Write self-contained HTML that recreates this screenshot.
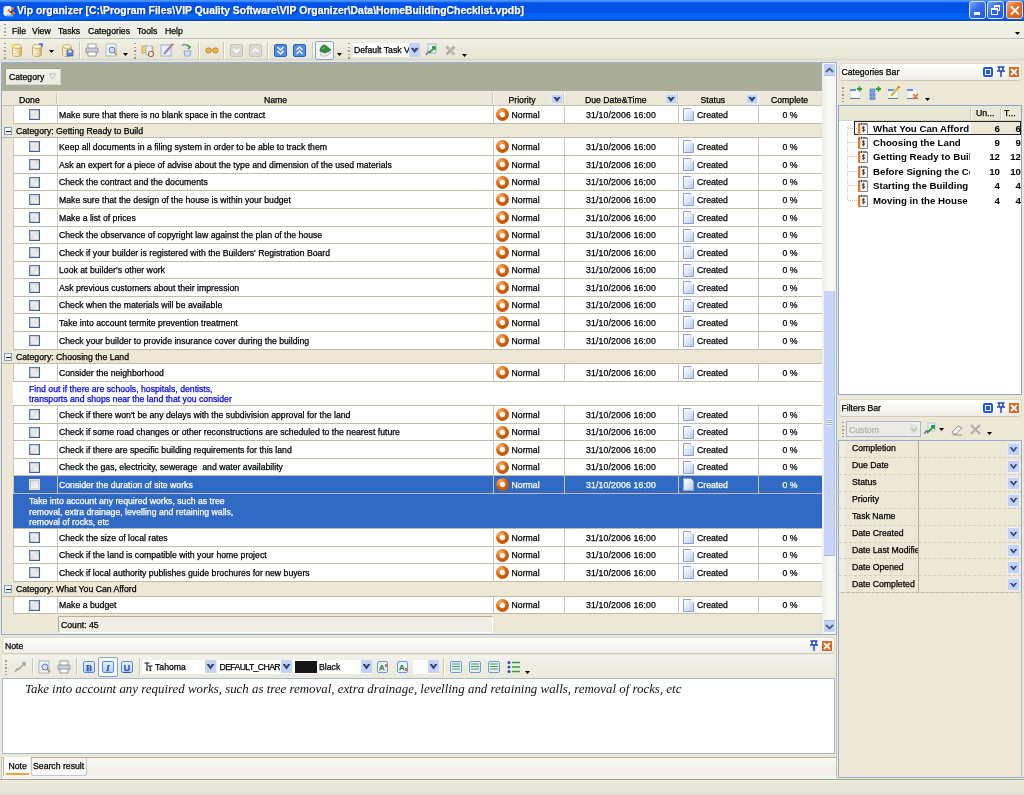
<!DOCTYPE html><html><head><meta charset="utf-8"><style>*{margin:0;padding:0;box-sizing:border-box}
html,body{width:1024px;height:795px;overflow:hidden;background:#ede7d6;font-family:"Liberation Sans",sans-serif;font-size:8.7px;color:#000;position:relative}
.a{position:absolute}
.t{position:absolute;white-space:nowrap;line-height:10px;-webkit-text-stroke:.25px currentColor}
/* title bar */
#title{left:0;top:0;width:1024px;height:21px;background:linear-gradient(#4d94f8 0,#4d94f8 1px,#0a63f0 2.5px,#0053e6 3.5px,#0053e6 12.5px,#0062f6 13.5px,#0062f6 19px,#0448d2 20px,#0448d2 21px)}
#title .tt{left:17px;top:4px;color:#fff;font-weight:bold;font-size:11.2px;text-shadow:1px 1px 0 #0b2d8f;line-height:13px;transform:scaleX(.93);transform-origin:0 0}
.wb{position:absolute;top:1px;width:17px;height:18px;border:1px solid #dde6fb;border-radius:3px;background:linear-gradient(135deg,#7ba5f7,#3a70ec 40%,#1f55e0)}
.wb.x{border-color:#f3d9c4;background:linear-gradient(135deg,#f2a878,#e16c24 45%,#d05a14)}
/* menubar */
#menu{left:0;top:21px;width:1024px;height:18px;background:linear-gradient(#fcfae8 0,#fcfae8 1px,#eeefe4 2.5px,#f0efe6 100%);border-bottom:1px solid #bdbcb3}
#menu .t{top:4.7px;font-size:8.7px}
/* toolbar */
#tool{left:0;top:39px;width:1024px;height:23px;background:linear-gradient(#f1f1e6 0,#edecdd 30%,#ece6da 45%,#eae8d8 60%,#e8e8d6 80%,#d8dccf 88%,#d8dccf 92%,#eee4dc 96%)}
.grip{position:absolute;width:2px;background:repeating-linear-gradient(#9d9b8c 0 1.5px,transparent 1.5px 3.6px)}
.sep{position:absolute;width:2px;background:#cdc9b8;border-right:1px solid #fbfaf5}
/* grid */
#grid{left:1px;top:62px;width:836px;height:573px;border:1px solid #98aed4;background:#ede7d6}
#grpbar{left:2px;top:63px;width:821px;height:28px;background:#abad9b}
#catbtn{left:5px;top:68px;width:56px;height:17px;background:linear-gradient(#f4f3ec,#ecebe2);border:1px solid #a39e8b;border-right-color:#d8d5c6;border-bottom-color:#d8d5c6}
#hdr{left:2px;top:91px;width:820px;height:15px;background:linear-gradient(#f0e9e1 0,#ede8d8 30%,#ebe7d6 100%);border-bottom:1px solid #c4c1ae}
.hs{position:absolute;top:93px;width:2px;height:11px;background:#cbc7b5;border-right:1px solid #f9f8f2}
.dd{position:absolute;width:12px;height:10px;background:#c3d3f6;border:1px solid #e4ecfb;border-radius:1px}
.dd::after{content:"";position:absolute;left:50%;top:50%;width:8px;height:5.5px;margin:-2.5px 0 0 -4px;background:#2c3f6c;clip-path:polygon(0 0,32% 0,50% 42%,68% 0,100% 0,50% 100%)}
.row{position:absolute;left:13px;width:809px;background:#fff;border-bottom:1px solid #bfbcab}
.row.sel{background:#316ac5;color:#fff}
.vl{position:absolute;top:0;bottom:-1px;width:1px;background:#c9c6b6}
.cb{position:absolute;left:16px;width:11px;height:11px;border:1px solid #4262a6;border-top-color:#5d78b0;border-left-color:#5d78b0;box-shadow:inset 0 0 0 .6px rgba(80,105,170,.45);background:linear-gradient(135deg,#f6f6f2,#e4e4de 50%,#fbfbfa)}
.cat{position:absolute;left:2px;width:820px;background:#ede7d6;border-bottom:1px solid #bfbcab}
.exp{position:absolute;left:2px;width:8px;height:8px;border:1px solid #86a0c4;background:linear-gradient(#fff,#eef0f2)}
.exp::after{content:"";position:absolute;left:1px;top:2.5px;width:4.5px;height:1.4px;background:#111}
.pri{position:absolute;left:483px;width:13px;height:13px;border-radius:50%;background:radial-gradient(circle at 50% 50%,#fff 0 2.3px,#f7b070 2.7px,transparent 3.2px),radial-gradient(circle at 35% 30%,#f9b070 0,#ee8a30 3px,#dc6a10 5px,#c95a08 7px)}
.doc{position:absolute;left:670px;width:11px;height:13px;border:1px solid #8aa4d2;background:linear-gradient(135deg,#ffffff,#d9e4f7 60%,#b6c8ea);clip-path:polygon(0 0,70% 0,100% 30%,100% 100%,0 100%)}
.prev{position:absolute;left:13px;width:809px;background:#fff;border-bottom:1px solid #bfbcab;color:#0000ff}
.prev.sel{background:#316ac5;color:#fff}
.ph{position:absolute;height:17px;border:1px solid #dedbcd;border-bottom-color:#cfccbd;border-radius:4px;background:linear-gradient(#fefefd 0,#f8f7f3 45%,#efede6 100%)}
.ibx{position:absolute;width:10px;height:10px;background:#1d5ae0;border-radius:2px}
.ibx::after{content:"";position:absolute;left:2px;top:2px;width:6px;height:6px;box-sizing:border-box;border:1.3px solid #fff;background:#1d5ae0}
.icl{position:absolute;width:10px;height:10px;background:#d9661c}
.tree{position:absolute;background:#fff;border:1px solid #8fa7cf}
.ti{position:absolute;left:34px;font-weight:bold;font-size:9.7px;white-space:nowrap;line-height:11px}
.tn{position:absolute;font-weight:bold;font-size:9.7px;text-align:right;line-height:11px}
.fr{position:absolute;left:1px;width:182px;height:17px;border-bottom:1px dashed #d3cfbf}
.fdd{position:absolute;width:13px;height:13px;background:#c2d3f7;border:1px solid #eaf0fb;border-radius:1px}
.fdd::after{content:"";position:absolute;left:50%;top:50%;width:8px;height:5px;margin:-2px 0 0 -4px;background:#2f4470;clip-path:polygon(0 0,28% 0,50% 50%,72% 0,100% 0,50% 100%)}
</style></head><body><div id="root" style="position:absolute;left:0;top:0;width:1024px;height:795px;overflow:hidden;background:#ede7d6;will-change:transform"><div id="title" class="a">
<svg class="a" style="left:1px;top:2px" width="16" height="16" viewBox="0 0 16 16"><path d="M2.5 6.5c0-1.5 1-2.5 2.5-2.5h4.5l1 2-.5 8H5c-1.5 0-2.5-1-2.5-2z" fill="#f2f0ee"/><path d="M3 7c0-1 .5-2 1.5-2" stroke="#f8c070" stroke-width="1.2" fill="none"/><rect x="5.5" y="12.5" width="6.5" height="2" fill="#9fb0d8"/><path d="M7.5 9.5c0-1.2 1-1.5 1.5-1.5" stroke="#e8720e" stroke-width="2.2" fill="none"/><path d="M8.5 10h3" stroke="#7a1c1c" stroke-width="1.6"/><circle cx="12.5" cy="11" r="1.6" fill="#ea7a14"/><circle cx="11.5" cy="6.5" r="1.4" fill="#f08a24"/></svg>
<div class="t tt">Vip organizer [C:\Program Files\VIP Quality Software\VIP Organizer\Data\HomeBuildingChecklist.vpdb]</div>
<div class="wb" style="left:969px"><div class="a" style="left:4px;top:10px;width:6px;height:3px;background:#fff"></div></div>
<div class="wb" style="left:987px"><div class="a" style="left:6px;top:3px;width:6px;height:6px;border:1px solid #fff;border-top-width:2px"></div><div class="a" style="left:3px;top:6px;width:7px;height:7px;border:1px solid #fff;border-top-width:2px;background:#2d66e8"></div></div>
<div class="wb x" style="left:1006px"><svg class="a" style="left:3px;top:3px" width="10" height="11" viewBox="0 0 10 11"><path d="M1 1.5L9 9.5M9 1.5L1 9.5" stroke="#fff" stroke-width="1.8"/></svg></div>
</div>
<div id="menu" class="a">
<div class="grip" style="left:4px;top:3px;height:12px"></div>
<div class="t" style="left:12px;top:4.7px;">File</div>
<div class="t" style="left:32px;top:4.7px;">View</div>
<div class="t" style="left:58px;top:4.7px;">Tasks</div>
<div class="t" style="left:88px;top:4.7px;">Categories</div>
<div class="t" style="left:137px;top:4.7px;">Tools</div>
<div class="t" style="left:165px;top:4.7px;">Help</div>
<svg class="a" style="left:1015px;top:11px" width="5" height="3" viewBox="0 0 5 3"><path d="M0 0h5L2.5 3z" fill="#000"/></svg>
</div>
<div id="tool" class="a">
<div class="grip" style="left:4px;top:4px;height:16px"></div>
<svg class="a" style="left:10px;top:4px" width="14" height="14" viewBox="0 0 14 14"><defs><linearGradient id="dbg" x1="0" x2="1"><stop offset="0" stop-color="#fffdf4"/><stop offset=".55" stop-color="#f3e3b8"/><stop offset="1" stop-color="#c9a55a"/></linearGradient></defs><path d="M2.5 3.5v8c0 1.1 2 2 4.5 2s4.5-.9 4.5-2v-8" fill="url(#dbg)" stroke="#c19a4e" stroke-width=".8"/><ellipse cx="7" cy="3.5" rx="4.5" ry="2" fill="#fbf3d8" stroke="#c19a4e" stroke-width=".8"/><path d="M2.8 7c1 .9 7.4.9 8.4 0M2.8 10c1 .9 7.4.9 8.4 0" fill="none" stroke="#e0c98e" stroke-width=".7"/><path d="M1 2.5h4M3 .5v4M1.5 1l3 3M4.5 1l-3 3" stroke="#f4e23a" stroke-width="1"/></svg>
<svg class="a" style="left:30px;top:4px" width="14" height="14" viewBox="0 0 14 14"><defs><linearGradient id="dbg" x1="0" x2="1"><stop offset="0" stop-color="#fffdf4"/><stop offset=".55" stop-color="#f3e3b8"/><stop offset="1" stop-color="#c9a55a"/></linearGradient></defs><path d="M2.5 3.5v8c0 1.1 2 2 4.5 2s4.5-.9 4.5-2v-8" fill="url(#dbg)" stroke="#c19a4e" stroke-width=".8"/><ellipse cx="7" cy="3.5" rx="4.5" ry="2" fill="#fbf3d8" stroke="#c19a4e" stroke-width=".8"/><path d="M2.8 7c1 .9 7.4.9 8.4 0M2.8 10c1 .9 7.4.9 8.4 0" fill="none" stroke="#e0c98e" stroke-width=".7"/><path d="M9 1h3v3" fill="none" stroke="#3a6fd8" stroke-width="1.6"/></svg>
<svg class="a" style="left:49px;top:11px" width="5" height="3" viewBox="0 0 5 3"><path d="M0 0h5L2.5 3z" fill="#000"/></svg>
<svg class="a" style="left:60px;top:4px" width="14" height="14" viewBox="0 0 14 14"><defs><linearGradient id="dbg" x1="0" x2="1"><stop offset="0" stop-color="#fffdf4"/><stop offset=".55" stop-color="#f3e3b8"/><stop offset="1" stop-color="#c9a55a"/></linearGradient></defs><path d="M2.5 3.5v8c0 1.1 2 2 4.5 2s4.5-.9 4.5-2v-8" fill="url(#dbg)" stroke="#c19a4e" stroke-width=".8"/><ellipse cx="7" cy="3.5" rx="4.5" ry="2" fill="#fbf3d8" stroke="#c19a4e" stroke-width=".8"/><path d="M2.8 7c1 .9 7.4.9 8.4 0M2.8 10c1 .9 7.4.9 8.4 0" fill="none" stroke="#e0c98e" stroke-width=".7"/><rect x="7" y="7" width="6" height="6" fill="#5f7fc8" stroke="#3b5ba8" stroke-width=".6"/><rect x="8.5" y="7.5" width="3" height="2" fill="#fff"/></svg>
<div class="sep" style="left:79px;top:3px;height:17px"></div>
<svg class="a" style="left:85px;top:4px" width="14" height="14" viewBox="0 0 14 14"><rect x="3" y="1" width="8" height="5" fill="#fff" stroke="#8a8a8a" stroke-width=".8"/><rect x="1" y="5" width="12" height="5" rx="1" fill="#c9cdd4" stroke="#7d8593" stroke-width=".8"/><rect x="3" y="9" width="8" height="4" fill="#fff" stroke="#8a8a8a" stroke-width=".8"/></svg>
<svg class="a" style="left:105px;top:4px" width="14" height="14" viewBox="0 0 14 14"><rect x="1" y="1" width="10" height="12" fill="#f4f7fc" stroke="#9aa7c0" stroke-width=".8"/><circle cx="7" cy="7" r="3" fill="#cfe0f8" stroke="#5b7bb6" stroke-width="1"/><path d="M9 9l3 3" stroke="#c08a3a" stroke-width="1.5"/></svg>
<svg class="a" style="left:123px;top:14px" width="5" height="3" viewBox="0 0 5 3"><path d="M0 0h5L2.5 3z" fill="#000"/></svg>
<div class="grip" style="left:134px;top:4px;height:16px"></div>
<svg class="a" style="left:141px;top:4px" width="14" height="14" viewBox="0 0 14 14"><path d="M1 3h5l1 1h5v6H1z" fill="#f2d36a" stroke="#c09a30" stroke-width=".7"/><rect x="5" y="3" width="6" height="9" fill="#e8effa" stroke="#8ea5cf" stroke-width=".7"/><circle cx="10" cy="11" r="2.5" fill="#fff" stroke="#c0552a" stroke-width="1.2"/></svg>
<svg class="a" style="left:160px;top:4px" width="14" height="14" viewBox="0 0 14 14"><rect x="1" y="2" width="10" height="11" fill="#eef3fb" stroke="#8a9dc4" stroke-width=".8"/><path d="M4 11l7-8" stroke="#9a7ad0" stroke-width="2"/><path d="M11 3l2-2" stroke="#e0702a" stroke-width="2"/></svg>
<svg class="a" style="left:180px;top:4px" width="14" height="14" viewBox="0 0 14 14"><path d="M2 3c1-2 4-2 5 0" fill="none" stroke="#7f93b8" stroke-width="1.5"/><path d="M7 2l3 2-2 2" fill="none" stroke="#39a03a" stroke-width="1.6"/><path d="M4 8h7l-1 5H5z" fill="#cfe0f6" stroke="#7a9ad0" stroke-width=".8"/></svg>
<div class="sep" style="left:198px;top:3px;height:17px"></div>
<svg class="a" style="left:205px;top:4px" width="14" height="14" viewBox="0 0 14 14"><rect x="1" y="5" width="5" height="5" rx="2" fill="#f2b84a" stroke="#b0762a" stroke-width=".8"/><rect x="8" y="5" width="5" height="5" rx="2" fill="#f2b84a" stroke="#b0762a" stroke-width=".8"/><rect x="5" y="6" width="4" height="2" fill="#d9a040"/></svg>
<div class="sep" style="left:223px;top:3px;height:17px"></div>
<svg class="a" style="left:230px;top:5px" width="13" height="13" viewBox="0 0 13 13"><rect x=".5" y=".5" width="12" height="12" rx="1.5" fill="#d9d8d2" stroke="#c4c3bc" stroke-width="1"/><path d="M3.5 5l3 3 3-3" fill="none" stroke="#fff" stroke-width="1.6"/></svg>
<svg class="a" style="left:249px;top:5px" width="13" height="13" viewBox="0 0 13 13"><rect x=".5" y=".5" width="12" height="12" rx="1.5" fill="#d9d8d2" stroke="#c4c3bc" stroke-width="1"/><path d="M3.5 8l3-3 3 3" fill="none" stroke="#fff" stroke-width="1.6"/></svg>
<div class="sep" style="left:267px;top:3px;height:17px"></div>
<svg class="a" style="left:274px;top:5px" width="13" height="13" viewBox="0 0 13 13"><rect x=".5" y=".5" width="12" height="12" rx="1.5" fill="#4f8ce8" stroke="#2d64c4" stroke-width="1"/><path d="M3.5 3l3 3 3-3M3.5 7l3 3 3-3" fill="none" stroke="#fff" stroke-width="1.3"/></svg>
<svg class="a" style="left:293px;top:5px" width="13" height="13" viewBox="0 0 13 13"><rect x=".5" y=".5" width="12" height="12" rx="1.5" fill="#4f8ce8" stroke="#2d64c4" stroke-width="1"/><path d="M3.5 6l3-3 3 3M3.5 10l3-3 3 3" fill="none" stroke="#fff" stroke-width="1.3"/></svg>
<div class="sep" style="left:312px;top:3px;height:17px"></div>
<div class="a" style="left:315px;top:2px;width:19px;height:19px;border:1px solid #8aa2c8;border-radius:2px;background:#f4f4f0"></div>
<svg class="a" style="left:318px;top:4px" width="14" height="14" viewBox="0 0 14 14"><path d="M3 13l-1-5 5-1 6 3-5 3z" fill="#e6ebf0" stroke="#9aa8b8" stroke-width=".6"/><path d="M2 8c0-3 2-6 5-6l6 5-6 3z" fill="#2d8f3c" stroke="#1b5e26" stroke-width=".7"/><path d="M4 6l3-2" stroke="#7fd08a" stroke-width="1"/></svg>
<svg class="a" style="left:337px;top:14px" width="5" height="3" viewBox="0 0 5 3"><path d="M0 0h5L2.5 3z" fill="#000"/></svg>
<div class="grip" style="left:348px;top:4px;height:16px"></div>
<div class="a" style="left:353px;top:4px;width:67px;height:14px;background:#fff"><div class="t" style="left:1px;top:2px">Default Task V</div></div>
<div class="dd" style="left:409px;top:4px;width:11px;height:14px;border:none;background:#c1d2f6"></div>
<svg class="a" style="left:411px;top:8px" width="8" height="6" viewBox="0 0 8 6"><path d="M1 1l3 3 3-3" fill="none" stroke="#3c4f78" stroke-width="1.7"/></svg>
<svg class="a" style="left:424px;top:4px" width="14" height="14" viewBox="0 0 14 14"><rect x="4" y="1" width="8" height="9" fill="#e8eef9" stroke="#8ea5cf" stroke-width=".7"/><path d="M2 12l2-3h3" fill="none" stroke="#7a6ad0" stroke-width="1.4"/><path d="M5 10l5-5M8 4h3v3" fill="none" stroke="#39a03a" stroke-width="1.8"/></svg>
<svg class="a" style="left:444px;top:5px" width="13" height="13" viewBox="0 0 13 13"><path d="M2.5 2.5l8 8M10.5 2.5l-8 8" stroke="#b0afa8" stroke-width="2.8"/><path d="M3 2.5l7.5 7.5" stroke="#d8d7d0" stroke-width=".8"/></svg>
<svg class="a" style="left:462px;top:15px" width="5" height="3" viewBox="0 0 5 3"><path d="M0 0h5L2.5 3z" fill="#000"/></svg>
</div>
<div id="grid" class="a"></div>
<div id="grpbar" class="a"></div>
<div id="catbtn" class="a"><div class="t" style="left:3px;top:3.3px">Category</div><svg class="a" style="left:43px;top:4px" width="7" height="7" viewBox="0 0 7 7"><path d="M.5 .8h6L3.5 6z" fill="none" stroke="#b9b7ab" stroke-width=".9"/></svg></div>
<div id="hdr" class="a"></div>
<div class="hs" style="left:56px"></div>
<div class="hs" style="left:492px"></div>
<div class="hs" style="left:563px"></div>
<div class="hs" style="left:677px"></div>
<div class="hs" style="left:757px"></div>
<div class="t" style="left:19px;top:94.8px;">Done</div>
<div class="t" style="left:264px;top:94.8px;">Name</div>
<div class="t" style="left:508.5px;top:94.8px;">Priority</div>
<div class="t" style="left:585px;top:94.8px;">Due Date&amp;Time</div>
<div class="t" style="left:700.5px;top:94.8px;">Status</div>
<div class="t" style="left:771px;top:94.8px;">Complete</div>
<div class="dd" style="left:551px;top:94px"></div>
<div class="dd" style="left:665px;top:94px"></div>
<div class="dd" style="left:746px;top:94px"></div>
<div class="row" style="top:106px;height:18px"><div class="vl" style="left:0"></div><div class="vl" style="left:44px"></div><div class="vl" style="left:480px"></div><div class="vl" style="left:551px"></div><div class="vl" style="left:665px"></div><div class="vl" style="left:745px"></div><div class="cb" style="top:3px;"></div><div class="t" style="left:46px;top:4.3px">Make sure that there is no blank space in the contract</div><div class="pri" style="top:2px"></div><div class="t" style="left:498.6px;top:4.3px">Normal</div><div class="t" style="left:551px;width:114px;text-align:center;top:4.3px;letter-spacing:.15px">31/10/2006 16:00</div><div class="doc" style="top:2px"></div><div class="t" style="left:684px;top:4.3px">Created</div><div class="t" style="left:745px;width:64px;text-align:center;top:4.3px">0 %</div></div>
<div class="cat" style="top:124px;height:14px"><div class="exp" style="top:3px"></div><div class="t" style="left:14px;top:1.5px">Category: Getting Ready to Build</div></div>
<div class="row" style="top:138px;height:18px"><div class="vl" style="left:0"></div><div class="vl" style="left:44px"></div><div class="vl" style="left:480px"></div><div class="vl" style="left:551px"></div><div class="vl" style="left:665px"></div><div class="vl" style="left:745px"></div><div class="cb" style="top:3px;"></div><div class="t" style="left:46px;top:3.7px">Keep all documents in a filing system in order to be able to track them</div><div class="pri" style="top:2px"></div><div class="t" style="left:498.6px;top:3.7px">Normal</div><div class="t" style="left:551px;width:114px;text-align:center;top:3.7px;letter-spacing:.15px">31/10/2006 16:00</div><div class="doc" style="top:2px"></div><div class="t" style="left:684px;top:3.7px">Created</div><div class="t" style="left:745px;width:64px;text-align:center;top:3.7px">0 %</div></div>
<div class="row" style="top:156px;height:18px"><div class="vl" style="left:0"></div><div class="vl" style="left:44px"></div><div class="vl" style="left:480px"></div><div class="vl" style="left:551px"></div><div class="vl" style="left:665px"></div><div class="vl" style="left:745px"></div><div class="cb" style="top:3px;"></div><div class="t" style="left:46px;top:3.7px">Ask an expert for a piece of advise about the type and dimension of the used materials</div><div class="pri" style="top:2px"></div><div class="t" style="left:498.6px;top:3.7px">Normal</div><div class="t" style="left:551px;width:114px;text-align:center;top:3.7px;letter-spacing:.15px">31/10/2006 16:00</div><div class="doc" style="top:2px"></div><div class="t" style="left:684px;top:3.7px">Created</div><div class="t" style="left:745px;width:64px;text-align:center;top:3.7px">0 %</div></div>
<div class="row" style="top:174px;height:17px"><div class="vl" style="left:0"></div><div class="vl" style="left:44px"></div><div class="vl" style="left:480px"></div><div class="vl" style="left:551px"></div><div class="vl" style="left:665px"></div><div class="vl" style="left:745px"></div><div class="cb" style="top:3px;"></div><div class="t" style="left:46px;top:3.2px">Check the contract and the documents</div><div class="pri" style="top:2px"></div><div class="t" style="left:498.6px;top:3.2px">Normal</div><div class="t" style="left:551px;width:114px;text-align:center;top:3.2px;letter-spacing:.15px">31/10/2006 16:00</div><div class="doc" style="top:2px"></div><div class="t" style="left:684px;top:3.2px">Created</div><div class="t" style="left:745px;width:64px;text-align:center;top:3.2px">0 %</div></div>
<div class="row" style="top:191px;height:18px"><div class="vl" style="left:0"></div><div class="vl" style="left:44px"></div><div class="vl" style="left:480px"></div><div class="vl" style="left:551px"></div><div class="vl" style="left:665px"></div><div class="vl" style="left:745px"></div><div class="cb" style="top:3px;"></div><div class="t" style="left:46px;top:3.7px">Make sure that the design of the house is within your budget</div><div class="pri" style="top:2px"></div><div class="t" style="left:498.6px;top:3.7px">Normal</div><div class="t" style="left:551px;width:114px;text-align:center;top:3.7px;letter-spacing:.15px">31/10/2006 16:00</div><div class="doc" style="top:2px"></div><div class="t" style="left:684px;top:3.7px">Created</div><div class="t" style="left:745px;width:64px;text-align:center;top:3.7px">0 %</div></div>
<div class="row" style="top:209px;height:18px"><div class="vl" style="left:0"></div><div class="vl" style="left:44px"></div><div class="vl" style="left:480px"></div><div class="vl" style="left:551px"></div><div class="vl" style="left:665px"></div><div class="vl" style="left:745px"></div><div class="cb" style="top:3px;"></div><div class="t" style="left:46px;top:3.7px">Make a list of prices</div><div class="pri" style="top:2px"></div><div class="t" style="left:498.6px;top:3.7px">Normal</div><div class="t" style="left:551px;width:114px;text-align:center;top:3.7px;letter-spacing:.15px">31/10/2006 16:00</div><div class="doc" style="top:2px"></div><div class="t" style="left:684px;top:3.7px">Created</div><div class="t" style="left:745px;width:64px;text-align:center;top:3.7px">0 %</div></div>
<div class="row" style="top:227px;height:17px"><div class="vl" style="left:0"></div><div class="vl" style="left:44px"></div><div class="vl" style="left:480px"></div><div class="vl" style="left:551px"></div><div class="vl" style="left:665px"></div><div class="vl" style="left:745px"></div><div class="cb" style="top:3px;"></div><div class="t" style="left:46px;top:3.2px">Check the observance of copyright law against the plan of the house</div><div class="pri" style="top:2px"></div><div class="t" style="left:498.6px;top:3.2px">Normal</div><div class="t" style="left:551px;width:114px;text-align:center;top:3.2px;letter-spacing:.15px">31/10/2006 16:00</div><div class="doc" style="top:2px"></div><div class="t" style="left:684px;top:3.2px">Created</div><div class="t" style="left:745px;width:64px;text-align:center;top:3.2px">0 %</div></div>
<div class="row" style="top:244px;height:18px"><div class="vl" style="left:0"></div><div class="vl" style="left:44px"></div><div class="vl" style="left:480px"></div><div class="vl" style="left:551px"></div><div class="vl" style="left:665px"></div><div class="vl" style="left:745px"></div><div class="cb" style="top:3px;"></div><div class="t" style="left:46px;top:3.7px">Check if your builder is registered with the Builders&#x27; Registration Board</div><div class="pri" style="top:2px"></div><div class="t" style="left:498.6px;top:3.7px">Normal</div><div class="t" style="left:551px;width:114px;text-align:center;top:3.7px;letter-spacing:.15px">31/10/2006 16:00</div><div class="doc" style="top:2px"></div><div class="t" style="left:684px;top:3.7px">Created</div><div class="t" style="left:745px;width:64px;text-align:center;top:3.7px">0 %</div></div>
<div class="row" style="top:262px;height:17px"><div class="vl" style="left:0"></div><div class="vl" style="left:44px"></div><div class="vl" style="left:480px"></div><div class="vl" style="left:551px"></div><div class="vl" style="left:665px"></div><div class="vl" style="left:745px"></div><div class="cb" style="top:3px;"></div><div class="t" style="left:46px;top:3.2px">Look at builder&#x27;s other work</div><div class="pri" style="top:2px"></div><div class="t" style="left:498.6px;top:3.2px">Normal</div><div class="t" style="left:551px;width:114px;text-align:center;top:3.2px;letter-spacing:.15px">31/10/2006 16:00</div><div class="doc" style="top:2px"></div><div class="t" style="left:684px;top:3.2px">Created</div><div class="t" style="left:745px;width:64px;text-align:center;top:3.2px">0 %</div></div>
<div class="row" style="top:279px;height:18px"><div class="vl" style="left:0"></div><div class="vl" style="left:44px"></div><div class="vl" style="left:480px"></div><div class="vl" style="left:551px"></div><div class="vl" style="left:665px"></div><div class="vl" style="left:745px"></div><div class="cb" style="top:3px;"></div><div class="t" style="left:46px;top:3.7px">Ask previous customers about their impression</div><div class="pri" style="top:2px"></div><div class="t" style="left:498.6px;top:3.7px">Normal</div><div class="t" style="left:551px;width:114px;text-align:center;top:3.7px;letter-spacing:.15px">31/10/2006 16:00</div><div class="doc" style="top:2px"></div><div class="t" style="left:684px;top:3.7px">Created</div><div class="t" style="left:745px;width:64px;text-align:center;top:3.7px">0 %</div></div>
<div class="row" style="top:297px;height:17px"><div class="vl" style="left:0"></div><div class="vl" style="left:44px"></div><div class="vl" style="left:480px"></div><div class="vl" style="left:551px"></div><div class="vl" style="left:665px"></div><div class="vl" style="left:745px"></div><div class="cb" style="top:3px;"></div><div class="t" style="left:46px;top:3.2px">Check when the materials will be available</div><div class="pri" style="top:2px"></div><div class="t" style="left:498.6px;top:3.2px">Normal</div><div class="t" style="left:551px;width:114px;text-align:center;top:3.2px;letter-spacing:.15px">31/10/2006 16:00</div><div class="doc" style="top:2px"></div><div class="t" style="left:684px;top:3.2px">Created</div><div class="t" style="left:745px;width:64px;text-align:center;top:3.2px">0 %</div></div>
<div class="row" style="top:314px;height:18px"><div class="vl" style="left:0"></div><div class="vl" style="left:44px"></div><div class="vl" style="left:480px"></div><div class="vl" style="left:551px"></div><div class="vl" style="left:665px"></div><div class="vl" style="left:745px"></div><div class="cb" style="top:3px;"></div><div class="t" style="left:46px;top:3.7px">Take into account termite prevention treatment</div><div class="pri" style="top:2px"></div><div class="t" style="left:498.6px;top:3.7px">Normal</div><div class="t" style="left:551px;width:114px;text-align:center;top:3.7px;letter-spacing:.15px">31/10/2006 16:00</div><div class="doc" style="top:2px"></div><div class="t" style="left:684px;top:3.7px">Created</div><div class="t" style="left:745px;width:64px;text-align:center;top:3.7px">0 %</div></div>
<div class="row" style="top:332px;height:18px"><div class="vl" style="left:0"></div><div class="vl" style="left:44px"></div><div class="vl" style="left:480px"></div><div class="vl" style="left:551px"></div><div class="vl" style="left:665px"></div><div class="vl" style="left:745px"></div><div class="cb" style="top:3px;"></div><div class="t" style="left:46px;top:3.7px">Check your builder to provide insurance cover during the building</div><div class="pri" style="top:2px"></div><div class="t" style="left:498.6px;top:3.7px">Normal</div><div class="t" style="left:551px;width:114px;text-align:center;top:3.7px;letter-spacing:.15px">31/10/2006 16:00</div><div class="doc" style="top:2px"></div><div class="t" style="left:684px;top:3.7px">Created</div><div class="t" style="left:745px;width:64px;text-align:center;top:3.7px">0 %</div></div>
<div class="cat" style="top:350px;height:14px"><div class="exp" style="top:3px"></div><div class="t" style="left:14px;top:1.5px">Category: Choosing the Land</div></div>
<div class="row" style="top:364px;height:18px"><div class="vl" style="left:0"></div><div class="vl" style="left:44px"></div><div class="vl" style="left:480px"></div><div class="vl" style="left:551px"></div><div class="vl" style="left:665px"></div><div class="vl" style="left:745px"></div><div class="cb" style="top:3px;"></div><div class="t" style="left:46px;top:3.7px">Consider the neighborhood</div><div class="pri" style="top:2px"></div><div class="t" style="left:498.6px;top:3.7px">Normal</div><div class="t" style="left:551px;width:114px;text-align:center;top:3.7px;letter-spacing:.15px">31/10/2006 16:00</div><div class="doc" style="top:2px"></div><div class="t" style="left:684px;top:3.7px">Created</div><div class="t" style="left:745px;width:64px;text-align:center;top:3.7px">0 %</div></div>
<div class="prev" style="top:382px;height:24px"><div class="t" style="left:16px;top:1.5px;line-height:10.4px">Find out if there are schools, hospitals, dentists,<br>transports and shops near the land that you consider</div></div>
<div class="row" style="top:406px;height:18px"><div class="vl" style="left:0"></div><div class="vl" style="left:44px"></div><div class="vl" style="left:480px"></div><div class="vl" style="left:551px"></div><div class="vl" style="left:665px"></div><div class="vl" style="left:745px"></div><div class="cb" style="top:3px;"></div><div class="t" style="left:46px;top:3.7px">Check if there won&#x27;t be any delays with the subdivision approval for the land</div><div class="pri" style="top:2px"></div><div class="t" style="left:498.6px;top:3.7px">Normal</div><div class="t" style="left:551px;width:114px;text-align:center;top:3.7px;letter-spacing:.15px">31/10/2006 16:00</div><div class="doc" style="top:2px"></div><div class="t" style="left:684px;top:3.7px">Created</div><div class="t" style="left:745px;width:64px;text-align:center;top:3.7px">0 %</div></div>
<div class="row" style="top:424px;height:17px"><div class="vl" style="left:0"></div><div class="vl" style="left:44px"></div><div class="vl" style="left:480px"></div><div class="vl" style="left:551px"></div><div class="vl" style="left:665px"></div><div class="vl" style="left:745px"></div><div class="cb" style="top:3px;"></div><div class="t" style="left:46px;top:3.2px">Check if some road changes or other reconstructions are scheduled to the nearest future</div><div class="pri" style="top:2px"></div><div class="t" style="left:498.6px;top:3.2px">Normal</div><div class="t" style="left:551px;width:114px;text-align:center;top:3.2px;letter-spacing:.15px">31/10/2006 16:00</div><div class="doc" style="top:2px"></div><div class="t" style="left:684px;top:3.2px">Created</div><div class="t" style="left:745px;width:64px;text-align:center;top:3.2px">0 %</div></div>
<div class="row" style="top:441px;height:18px"><div class="vl" style="left:0"></div><div class="vl" style="left:44px"></div><div class="vl" style="left:480px"></div><div class="vl" style="left:551px"></div><div class="vl" style="left:665px"></div><div class="vl" style="left:745px"></div><div class="cb" style="top:3px;"></div><div class="t" style="left:46px;top:3.7px">Check if there are specific building requirements for this land</div><div class="pri" style="top:2px"></div><div class="t" style="left:498.6px;top:3.7px">Normal</div><div class="t" style="left:551px;width:114px;text-align:center;top:3.7px;letter-spacing:.15px">31/10/2006 16:00</div><div class="doc" style="top:2px"></div><div class="t" style="left:684px;top:3.7px">Created</div><div class="t" style="left:745px;width:64px;text-align:center;top:3.7px">0 %</div></div>
<div class="row" style="top:459px;height:17px"><div class="vl" style="left:0"></div><div class="vl" style="left:44px"></div><div class="vl" style="left:480px"></div><div class="vl" style="left:551px"></div><div class="vl" style="left:665px"></div><div class="vl" style="left:745px"></div><div class="cb" style="top:3px;"></div><div class="t" style="left:46px;top:3.2px">Check the gas, electricity, sewerage&nbsp; and water availability</div><div class="pri" style="top:2px"></div><div class="t" style="left:498.6px;top:3.2px">Normal</div><div class="t" style="left:551px;width:114px;text-align:center;top:3.2px;letter-spacing:.15px">31/10/2006 16:00</div><div class="doc" style="top:2px"></div><div class="t" style="left:684px;top:3.2px">Created</div><div class="t" style="left:745px;width:64px;text-align:center;top:3.2px">0 %</div></div>
<div class="row sel" style="top:476px;height:18px"><div class="vl" style="left:0"></div><div class="vl" style="left:44px"></div><div class="vl" style="left:480px"></div><div class="vl" style="left:551px"></div><div class="vl" style="left:665px"></div><div class="vl" style="left:745px"></div><div class="cb" style="top:3px;border-color:#e8e8e4;background:linear-gradient(135deg,#d8d8d2,#fcfcfb);"></div><div class="t" style="left:46px;top:3.7px">Consider the duration of site works</div><div class="pri" style="top:2px"></div><div class="t" style="left:498.6px;top:3.7px">Normal</div><div class="t" style="left:551px;width:114px;text-align:center;top:3.7px;letter-spacing:.15px">31/10/2006 16:00</div><div class="doc" style="top:2px"></div><div class="t" style="left:684px;top:3.7px">Created</div><div class="t" style="left:745px;width:64px;text-align:center;top:3.7px">0 %</div></div>
<div class="prev sel" style="top:494px;height:35px"><div class="t" style="left:16px;top:2.3px;line-height:10.4px">Take into account any required works, such as tree<br>removal, extra drainage, levelling and retaining walls,<br>removal of rocks, etc</div></div>
<div class="row" style="top:529px;height:18px"><div class="vl" style="left:0"></div><div class="vl" style="left:44px"></div><div class="vl" style="left:480px"></div><div class="vl" style="left:551px"></div><div class="vl" style="left:665px"></div><div class="vl" style="left:745px"></div><div class="cb" style="top:3px;"></div><div class="t" style="left:46px;top:3.7px">Check the size of local rates</div><div class="pri" style="top:2px"></div><div class="t" style="left:498.6px;top:3.7px">Normal</div><div class="t" style="left:551px;width:114px;text-align:center;top:3.7px;letter-spacing:.15px">31/10/2006 16:00</div><div class="doc" style="top:2px"></div><div class="t" style="left:684px;top:3.7px">Created</div><div class="t" style="left:745px;width:64px;text-align:center;top:3.7px">0 %</div></div>
<div class="row" style="top:547px;height:17px"><div class="vl" style="left:0"></div><div class="vl" style="left:44px"></div><div class="vl" style="left:480px"></div><div class="vl" style="left:551px"></div><div class="vl" style="left:665px"></div><div class="vl" style="left:745px"></div><div class="cb" style="top:3px;"></div><div class="t" style="left:46px;top:3.2px">Check if the land is compatible with your home project</div><div class="pri" style="top:2px"></div><div class="t" style="left:498.6px;top:3.2px">Normal</div><div class="t" style="left:551px;width:114px;text-align:center;top:3.2px;letter-spacing:.15px">31/10/2006 16:00</div><div class="doc" style="top:2px"></div><div class="t" style="left:684px;top:3.2px">Created</div><div class="t" style="left:745px;width:64px;text-align:center;top:3.2px">0 %</div></div>
<div class="row" style="top:564px;height:18px"><div class="vl" style="left:0"></div><div class="vl" style="left:44px"></div><div class="vl" style="left:480px"></div><div class="vl" style="left:551px"></div><div class="vl" style="left:665px"></div><div class="vl" style="left:745px"></div><div class="cb" style="top:3px;"></div><div class="t" style="left:46px;top:3.7px">Check if local authority publishes guide brochures for new buyers</div><div class="pri" style="top:2px"></div><div class="t" style="left:498.6px;top:3.7px">Normal</div><div class="t" style="left:551px;width:114px;text-align:center;top:3.7px;letter-spacing:.15px">31/10/2006 16:00</div><div class="doc" style="top:2px"></div><div class="t" style="left:684px;top:3.7px">Created</div><div class="t" style="left:745px;width:64px;text-align:center;top:3.7px">0 %</div></div>
<div class="cat" style="top:582px;height:15px"><div class="exp" style="top:3px"></div><div class="t" style="left:14px;top:2.0px">Category: What You Can Afford</div></div>
<div class="row" style="top:597px;height:17px"><div class="vl" style="left:0"></div><div class="vl" style="left:44px"></div><div class="vl" style="left:480px"></div><div class="vl" style="left:551px"></div><div class="vl" style="left:665px"></div><div class="vl" style="left:745px"></div><div class="cb" style="top:3px;"></div><div class="t" style="left:46px;top:3.2px">Make a budget</div><div class="pri" style="top:2px"></div><div class="t" style="left:498.6px;top:3.2px">Normal</div><div class="t" style="left:551px;width:114px;text-align:center;top:3.2px;letter-spacing:.15px">31/10/2006 16:00</div><div class="doc" style="top:2px"></div><div class="t" style="left:684px;top:3.2px">Created</div><div class="t" style="left:745px;width:64px;text-align:center;top:3.2px">0 %</div></div>
<div class="a" style="left:2px;top:614px;width:820px;height:20px;background:#ede7d6"></div>
<div class="a" style="left:58px;top:616px;width:435px;height:17px;border:1px solid #b3b09d;border-right-color:#fff;border-bottom-color:#fff;background:#efeee6"><div class="t" style="left:2px;top:3px">Count: 45</div></div>
<div class="a" style="left:822px;top:63px;width:14px;height:571px;background:linear-gradient(90deg,#f0f0ea,#fafaf7 60%,#f3f3ee)"></div>
<div class="a" style="left:824px;top:64px;width:11px;height:12px;background:#c3d4fb;border-bottom:1px solid #a8bcee"><svg class="a" style="left:1px;top:3px" width="9" height="6" viewBox="0 0 9 6"><path d="M1 5L4.5 1.5L8 5" fill="none" stroke="#4d6185" stroke-width="1.8"/></svg></div>
<div class="a" style="left:824px;top:291px;width:11px;height:265px;background:#c6d5f8;border-bottom:1px solid #a6baf0;border-right:1px solid #afc3f2"></div>
<div class="a" style="left:826px;top:419px;width:6px;height:7px;background:repeating-linear-gradient(#eef3fe 0 1px,#9fb2e0 1px 2px)"></div>
<div class="a" style="left:824px;top:620px;width:11px;height:12px;background:#c3d4fb;border-top:1px solid #a8bcee"><svg class="a" style="left:1px;top:3px" width="9" height="6" viewBox="0 0 9 6"><path d="M1 1L4.5 4.5L8 1" fill="none" stroke="#4d6185" stroke-width="1.8"/></svg></div>
<div class="a" style="left:838px;top:62px;width:186px;height:717px;background:#ede7d6"></div>
<div class="a" style="left:838px;top:440px;width:1px;height:338px;background:#98b0dc"></div>
<div class="a" style="left:838px;top:777px;width:186px;height:1px;background:#98b0dc"></div>
<div class="a" style="left:1021px;top:440px;width:1px;height:338px;background:#a9bbd9"></div>
<div class="ph" style="left:839px;top:63px;width:183px;height:18px"></div>
<div class="t" style="left:841.4px;top:67.3px;">Categories Bar</div>
<div class="ibx" style="left:983px;top:67px"></div>
<svg class="a" style="left:996px;top:66px" width="10" height="11" viewBox="0 0 10 11"><path d="M1.5 1h7M3 1v4M7 1v4M1 5h8M5 5v6" stroke="#1d49c0" stroke-width="1.5" fill="none"/></svg>
<div class="icl" style="left:1009px;top:67px"><svg class="a" style="left:1px;top:1px" width="8" height="8" viewBox="0 0 8 8"><path d="M1 1l6 6M7 1L1 7" stroke="#fff" stroke-width="1.8"/></svg></div>
<div class="grip" style="left:842px;top:87px;height:15px"></div>
<svg class="a" style="left:849px;top:86px" width="14" height="14" viewBox="0 0 14 14"><path d="M1 4h3l1-1h6v9H1z" fill="#f6f8fc" stroke="#c9d3e4" stroke-width=".6"/><path d="M1 4h6" stroke="#3a7fe0" stroke-width="1.6"/><path d="M1 12.5h10" stroke="#6c7a8e" stroke-width="1"/><path d="M8 3h5M10.5 .5v5" stroke="#2fa02f" stroke-width="1.8"/></svg>
<svg class="a" style="left:868px;top:86px" width="14" height="14" viewBox="0 0 14 14"><rect x="2" y="3" width="5" height="3" fill="#7aa3e8" stroke="#3f6fc8" stroke-width=".6"/><rect x="2" y="7" width="5" height="3" fill="#7aa3e8" stroke="#3f6fc8" stroke-width=".6"/><rect x="2" y="11" width="5" height="2.5" fill="#7aa3e8" stroke="#3f6fc8" stroke-width=".6"/><path d="M8 3h5M10.5 .5v5" stroke="#2fa02f" stroke-width="1.8"/></svg>
<svg class="a" style="left:887px;top:86px" width="14" height="14" viewBox="0 0 14 14"><path d="M1 4h3l1-1h6v9H1z" fill="#f6f8fc" stroke="#c9d3e4" stroke-width=".6"/><path d="M1 4h6" stroke="#3a7fe0" stroke-width="1.6"/><path d="M1 12.5h10" stroke="#6c7a8e" stroke-width="1"/><path d="M4 10l7-8" stroke="#e7b030" stroke-width="2"/><path d="M11 2l1.5-1.5" stroke="#e06a20" stroke-width="2"/></svg>
<svg class="a" style="left:906px;top:86px" width="14" height="14" viewBox="0 0 14 14"><path d="M1 4h3l1-1h6v9H1z" fill="#f6f8fc" stroke="#c9d3e4" stroke-width=".6"/><path d="M1 4h6" stroke="#3a7fe0" stroke-width="1.6"/><path d="M1 12.5h10" stroke="#6c7a8e" stroke-width="1"/><path d="M7 8l5 5M12 8l-5 5" stroke="#e0702a" stroke-width="1.5"/></svg>
<svg class="a" style="left:925px;top:98px" width="5" height="3" viewBox="0 0 5 3"><path d="M0 0h5L2.5 3z" fill="#000"/></svg>
<div class="tree" style="left:838px;top:105px;width:184px;height:290px"></div>
<div class="a" style="left:839px;top:106px;width:182px;height:15px;background:linear-gradient(#ebe8d8,#e9e6d5);border-bottom:1px solid #d6d2bf"></div>
<div class="hs" style="left:970px;top:108px;height:11px"></div><div class="hs" style="left:1000px;top:108px;height:11px"></div>
<div class="t" style="left:976px;top:108px;">Un...</div>
<div class="t" style="left:1004px;top:108px;">T...</div>
<div class="a" style="left:847px;top:127px;width:1px;height:73px;background:repeating-linear-gradient(#c4c4c4 0 1px,transparent 1px 2px)"></div>
<div class="a" style="left:848px;top:127.5px;width:9px;height:1px;background:repeating-linear-gradient(90deg,#c4c4c4 0 1px,transparent 1px 2px)"></div>
<div class="a" style="left:971px;top:121.0px;width:50px;height:14px;background:#ede7d6"></div>
<div class="a" style="left:854px;top:121.0px;width:167px;height:14px;border:1px solid #222"></div>
<svg class="a" style="left:857px;top:122px" width="12" height="13" viewBox="0 0 12 13"><rect x="1.5" y="2" width="9" height="10.5" fill="#f6f6f8" stroke="#6a6a6a" stroke-width=".8"/><rect x="1" y="2" width="2.2" height="10.8" fill="#e8781e"/><path d="M1.5 2h1.5M8 2h2" stroke="#8a2a3a" stroke-width="1.2"/><path d="M4.5 .8v2M7 .8v2" stroke="#333" stroke-width="1"/><path d="M7.8 5.5c-.5-.8-2.6-.8-2.6.4s2.6.7 2.6 2-2.2 1.2-2.8.3M6.4 4.2v6" fill="none" stroke="#333" stroke-width=".9"/></svg>
<div class="a" style="left:873px;top:122.5px;width:97px;height:12px;overflow:hidden"><div class="ti" style="left:0;top:0">What You Can Afford</div></div>
<div class="tn" style="left:972px;top:122.5px;width:28px">6</div>
<div class="tn" style="left:1001px;top:122.5px;width:20px">6</div>
<div class="a" style="left:848px;top:141.9px;width:9px;height:1px;background:repeating-linear-gradient(90deg,#c4c4c4 0 1px,transparent 1px 2px)"></div>
<svg class="a" style="left:857px;top:136px" width="12" height="13" viewBox="0 0 12 13"><rect x="1.5" y="2" width="9" height="10.5" fill="#f6f6f8" stroke="#6a6a6a" stroke-width=".8"/><rect x="1" y="2" width="2.2" height="10.8" fill="#e8781e"/><path d="M1.5 2h1.5M8 2h2" stroke="#8a2a3a" stroke-width="1.2"/><path d="M4.5 .8v2M7 .8v2" stroke="#333" stroke-width="1"/><path d="M7.8 5.5c-.5-.8-2.6-.8-2.6.4s2.6.7 2.6 2-2.2 1.2-2.8.3M6.4 4.2v6" fill="none" stroke="#333" stroke-width=".9"/></svg>
<div class="a" style="left:873px;top:136.9px;width:97px;height:12px;overflow:hidden"><div class="ti" style="left:0;top:0">Choosing the Land</div></div>
<div class="tn" style="left:972px;top:136.9px;width:28px">9</div>
<div class="tn" style="left:1001px;top:136.9px;width:20px">9</div>
<div class="a" style="left:848px;top:156.3px;width:9px;height:1px;background:repeating-linear-gradient(90deg,#c4c4c4 0 1px,transparent 1px 2px)"></div>
<svg class="a" style="left:857px;top:150px" width="12" height="13" viewBox="0 0 12 13"><rect x="1.5" y="2" width="9" height="10.5" fill="#f6f6f8" stroke="#6a6a6a" stroke-width=".8"/><rect x="1" y="2" width="2.2" height="10.8" fill="#e8781e"/><path d="M1.5 2h1.5M8 2h2" stroke="#8a2a3a" stroke-width="1.2"/><path d="M4.5 .8v2M7 .8v2" stroke="#333" stroke-width="1"/><path d="M7.8 5.5c-.5-.8-2.6-.8-2.6.4s2.6.7 2.6 2-2.2 1.2-2.8.3M6.4 4.2v6" fill="none" stroke="#333" stroke-width=".9"/></svg>
<div class="a" style="left:873px;top:151.3px;width:97px;height:12px;overflow:hidden"><div class="ti" style="left:0;top:0">Getting Ready to Buil</div></div>
<div class="tn" style="left:972px;top:151.3px;width:28px">12</div>
<div class="tn" style="left:1001px;top:151.3px;width:20px">12</div>
<div class="a" style="left:848px;top:170.7px;width:9px;height:1px;background:repeating-linear-gradient(90deg,#c4c4c4 0 1px,transparent 1px 2px)"></div>
<svg class="a" style="left:857px;top:165px" width="12" height="13" viewBox="0 0 12 13"><rect x="1.5" y="2" width="9" height="10.5" fill="#f6f6f8" stroke="#6a6a6a" stroke-width=".8"/><rect x="1" y="2" width="2.2" height="10.8" fill="#e8781e"/><path d="M1.5 2h1.5M8 2h2" stroke="#8a2a3a" stroke-width="1.2"/><path d="M4.5 .8v2M7 .8v2" stroke="#333" stroke-width="1"/><path d="M7.8 5.5c-.5-.8-2.6-.8-2.6.4s2.6.7 2.6 2-2.2 1.2-2.8.3M6.4 4.2v6" fill="none" stroke="#333" stroke-width=".9"/></svg>
<div class="a" style="left:873px;top:165.7px;width:97px;height:12px;overflow:hidden"><div class="ti" style="left:0;top:0">Before Signing the Co</div></div>
<div class="tn" style="left:972px;top:165.7px;width:28px">10</div>
<div class="tn" style="left:1001px;top:165.7px;width:20px">10</div>
<div class="a" style="left:848px;top:185.1px;width:9px;height:1px;background:repeating-linear-gradient(90deg,#c4c4c4 0 1px,transparent 1px 2px)"></div>
<svg class="a" style="left:857px;top:179px" width="12" height="13" viewBox="0 0 12 13"><rect x="1.5" y="2" width="9" height="10.5" fill="#f6f6f8" stroke="#6a6a6a" stroke-width=".8"/><rect x="1" y="2" width="2.2" height="10.8" fill="#e8781e"/><path d="M1.5 2h1.5M8 2h2" stroke="#8a2a3a" stroke-width="1.2"/><path d="M4.5 .8v2M7 .8v2" stroke="#333" stroke-width="1"/><path d="M7.8 5.5c-.5-.8-2.6-.8-2.6.4s2.6.7 2.6 2-2.2 1.2-2.8.3M6.4 4.2v6" fill="none" stroke="#333" stroke-width=".9"/></svg>
<div class="a" style="left:873px;top:180.1px;width:97px;height:12px;overflow:hidden"><div class="ti" style="left:0;top:0">Starting the Building</div></div>
<div class="tn" style="left:972px;top:180.1px;width:28px">4</div>
<div class="tn" style="left:1001px;top:180.1px;width:20px">4</div>
<div class="a" style="left:848px;top:199.5px;width:9px;height:1px;background:repeating-linear-gradient(90deg,#c4c4c4 0 1px,transparent 1px 2px)"></div>
<svg class="a" style="left:857px;top:194px" width="12" height="13" viewBox="0 0 12 13"><rect x="1.5" y="2" width="9" height="10.5" fill="#f6f6f8" stroke="#6a6a6a" stroke-width=".8"/><rect x="1" y="2" width="2.2" height="10.8" fill="#e8781e"/><path d="M1.5 2h1.5M8 2h2" stroke="#8a2a3a" stroke-width="1.2"/><path d="M4.5 .8v2M7 .8v2" stroke="#333" stroke-width="1"/><path d="M7.8 5.5c-.5-.8-2.6-.8-2.6.4s2.6.7 2.6 2-2.2 1.2-2.8.3M6.4 4.2v6" fill="none" stroke="#333" stroke-width=".9"/></svg>
<div class="a" style="left:873px;top:194.5px;width:97px;height:12px;overflow:hidden"><div class="ti" style="left:0;top:0">Moving in the House</div></div>
<div class="tn" style="left:972px;top:194.5px;width:28px">4</div>
<div class="tn" style="left:1001px;top:194.5px;width:20px">4</div>
<div class="ph" style="left:839px;top:399px;width:183px;height:18px"></div>
<div class="t" style="left:841.4px;top:403.3px;">Filters Bar</div>
<div class="ibx" style="left:983px;top:403px"></div>
<svg class="a" style="left:996px;top:402px" width="10" height="11" viewBox="0 0 10 11"><path d="M1.5 1h7M3 1v4M7 1v4M1 5h8M5 5v6" stroke="#1d49c0" stroke-width="1.5" fill="none"/></svg>
<div class="icl" style="left:1009px;top:403px"><svg class="a" style="left:1px;top:1px" width="8" height="8" viewBox="0 0 8 8"><path d="M1 1l6 6M7 1L1 7" stroke="#fff" stroke-width="1.8"/></svg></div>
<div class="grip" style="left:842px;top:422px;height:15px"></div>
<div class="a" style="left:846px;top:421px;width:75px;height:16px;border:1px solid #a5b8d8;background:#ebeae5"><div class="t" style="left:2px;top:3px;color:#b3b2ab">Custom</div><div class="a" style="left:61px;top:1px;width:11px;height:12px;background:#e4e3dd;border:1px solid #f2f2ee"></div><svg class="a" style="left:63px;top:5px" width="8" height="5" viewBox="0 0 8 5"><path d="M1 1l3 3 3-3" fill="none" stroke="#c0c0b8" stroke-width="1.5"/></svg></div>
<svg class="a" style="left:923px;top:422px" width="14" height="14" viewBox="0 0 14 14"><rect x="5" y="1" width="7" height="8" fill="#eef2fa" stroke="#a0b4d8" stroke-width=".7"/><path d="M1.5 12l1.5-3h3" fill="none" stroke="#7060d0" stroke-width="1.4"/><path d="M4 11l6-6M8 4h3v3" fill="none" stroke="#2fa02f" stroke-width="1.8"/></svg>
<svg class="a" style="left:939px;top:428px" width="5" height="3" viewBox="0 0 5 3"><path d="M0 0h5L2.5 3z" fill="#000"/></svg>
<svg class="a" style="left:950px;top:423px" width="14" height="14" viewBox="0 0 14 14"><path d="M2 9l6-6 4 2-6 6H3z" fill="#f4f4f2" stroke="#8e8e88" stroke-width="1"/><path d="M3 12h9" stroke="#8e8e88" stroke-width="1"/></svg>
<svg class="a" style="left:969px;top:423px" width="13" height="13" viewBox="0 0 13 13"><path d="M2 2l9 9M11 2l-9 9" stroke="#b0afa8" stroke-width="2.2"/></svg>
<svg class="a" style="left:987px;top:432px" width="5" height="3" viewBox="0 0 5 3"><path d="M0 0h5L2.5 3z" fill="#000"/></svg>
<div class="a" style="left:838px;top:440px;width:184px;height:153px;border:1px solid #98acd0;border-bottom-color:#b9b6a7;background:linear-gradient(90deg,#f1eee4 0,#f1eee4 6px,#ede7d6 7px)"></div>
<div class="a" style="left:918px;top:441px;width:1px;height:151px;background:#b3b0a2"></div>
<div class="fr" style="left:839px;top:441.0px"></div>
<div class="a" style="left:852px;top:443.3px;width:66px;height:11px;overflow:hidden"><div class="t" style="left:0;top:0">Completion</div></div>
<div class="fdd" style="left:1007px;top:442.8px"></div>
<div class="fr" style="left:839px;top:457.9px"></div>
<div class="a" style="left:852px;top:460.2px;width:66px;height:11px;overflow:hidden"><div class="t" style="left:0;top:0">Due Date</div></div>
<div class="fdd" style="left:1007px;top:459.7px"></div>
<div class="fr" style="left:839px;top:474.8px"></div>
<div class="a" style="left:852px;top:477.1px;width:66px;height:11px;overflow:hidden"><div class="t" style="left:0;top:0">Status</div></div>
<div class="fdd" style="left:1007px;top:476.6px"></div>
<div class="fr" style="left:839px;top:491.7px"></div>
<div class="a" style="left:852px;top:494.0px;width:66px;height:11px;overflow:hidden"><div class="t" style="left:0;top:0">Priority</div></div>
<div class="fdd" style="left:1007px;top:493.5px"></div>
<div class="fr" style="left:839px;top:508.6px"></div>
<div class="a" style="left:852px;top:510.9px;width:66px;height:11px;overflow:hidden"><div class="t" style="left:0;top:0">Task Name</div></div>
<div class="fr" style="left:839px;top:525.5px"></div>
<div class="a" style="left:852px;top:527.8px;width:66px;height:11px;overflow:hidden"><div class="t" style="left:0;top:0">Date Created</div></div>
<div class="fdd" style="left:1007px;top:527.3px"></div>
<div class="fr" style="left:839px;top:542.4px"></div>
<div class="a" style="left:852px;top:544.7px;width:66px;height:11px;overflow:hidden"><div class="t" style="left:0;top:0">Date Last Modified</div></div>
<div class="fdd" style="left:1007px;top:544.2px"></div>
<div class="fr" style="left:839px;top:559.3px"></div>
<div class="a" style="left:852px;top:561.6px;width:66px;height:11px;overflow:hidden"><div class="t" style="left:0;top:0">Date Opened</div></div>
<div class="fdd" style="left:1007px;top:561.1px"></div>
<div class="fr" style="left:839px;top:576.2px"></div>
<div class="a" style="left:852px;top:578.5px;width:66px;height:11px;overflow:hidden"><div class="t" style="left:0;top:0">Date Completed</div></div>
<div class="fdd" style="left:1007px;top:578.0px"></div>
<div class="a" style="left:0;top:635px;width:838px;height:144px;background:#ede7d6"></div>
<div class="ph" style="left:2px;top:637px;width:833px"></div>
<div class="t" style="left:5px;top:641px;">Note</div>
<svg class="a" style="left:809px;top:640px" width="10" height="11" viewBox="0 0 10 11"><path d="M1.5 1h7M3 1v4M7 1v4M1 5h8M5 5v6" stroke="#1d49c0" stroke-width="1.5" fill="none"/></svg>
<div class="icl" style="left:822px;top:641px"><svg class="a" style="left:1px;top:1px" width="8" height="8" viewBox="0 0 8 8"><path d="M1 1l6 6M7 1L1 7" stroke="#fff" stroke-width="1.8"/></svg></div>
<div class="a" style="left:2px;top:655px;width:833px;height:23px;background:linear-gradient(#f4f3ec 0,#eeede2 45%,#ebe9da 100%)"></div>
<div class="a" style="left:836px;top:635px;width:1px;height:143px;background:#c8c6b8"></div>
<div class="grip" style="left:5px;top:660px;height:15px"></div>
<svg class="a" style="left:13px;top:660px" width="14" height="14" viewBox="0 0 14 14"><path d="M2 12l2-3h3M5 10l6-6M9 3h3v3" fill="none" stroke="#a8a8a2" stroke-width="1.6"/></svg>
<div class="sep" style="left:32px;top:658px;height:17px"></div>
<svg class="a" style="left:38px;top:660px" width="14" height="14" viewBox="0 0 14 14"><rect x="1" y="1" width="10" height="12" fill="#f4f7fc" stroke="#9aa7c0" stroke-width=".8"/><circle cx="7" cy="7" r="3" fill="#cfe0f8" stroke="#5b7bb6" stroke-width="1"/><path d="M9 9l3 3" stroke="#c08a3a" stroke-width="1.5"/></svg>
<svg class="a" style="left:57px;top:660px" width="14" height="14" viewBox="0 0 14 14"><rect x="3" y="1" width="8" height="5" fill="#fff" stroke="#8a8a8a" stroke-width=".8"/><rect x="1" y="5" width="12" height="5" rx="1" fill="#c9cdd4" stroke="#7d8593" stroke-width=".8"/><rect x="3" y="9" width="8" height="4" fill="#fff" stroke="#8a8a8a" stroke-width=".8"/></svg>
<div class="sep" style="left:76px;top:658px;height:17px"></div>
<div class="a" style="left:83px;top:661px;width:12px;height:12px;border:1px solid #5b8be0;border-radius:2px;background:linear-gradient(#e6f0fd,#b9d2f6)"><div class="t" style="left:0;top:0.5px;width:10px;text-align:center;font-family:'Liberation Serif',serif;font-weight:bold;font-size:9px;color:#2c56b8;">B</div></div>
<div class="a" style="left:98px;top:657px;width:20px;height:20px;border:1px solid #8aa2c8;border-radius:2px;background:#f6f6f2"></div>
<div class="a" style="left:102px;top:661px;width:12px;height:12px;border:1px solid #5b8be0;border-radius:2px;background:linear-gradient(#e6f0fd,#b9d2f6)"><div class="t" style="left:0;top:0.5px;width:10px;text-align:center;font-family:'Liberation Serif',serif;font-weight:bold;font-size:9px;color:#2c56b8;font-style:italic">I</div></div>
<div class="a" style="left:121px;top:661px;width:12px;height:12px;border:1px solid #5b8be0;border-radius:2px;background:linear-gradient(#e6f0fd,#b9d2f6)"><div class="t" style="left:0;top:0.5px;width:10px;text-align:center;font-family:'Liberation Serif',serif;font-weight:bold;font-size:9px;color:#2c56b8;text-decoration:underline;font-family:'Liberation Sans'">U</div></div>
<div class="sep" style="left:139px;top:658px;height:17px"></div>
<div class="a" style="left:142px;top:660px;width:74px;height:14px;background:#fff"></div>
<svg class="a" style="left:144px;top:662px" width="9" height="9" viewBox="0 0 9 9"><path d="M.5 1h5M3 1v7M2 8h2M4 4h4.5M6.2 4v4.5M5.3 8.5h2" stroke="#111" stroke-width="1.1" fill="none"/></svg>
<div class="t" style="left:155px;top:662px;">Tahoma</div>
<div class="dd" style="left:205px;top:660px;width:11px;height:13px;border:none"></div>
<div class="a" style="left:217px;top:660px;width:75px;height:14px;background:#fff"></div>
<div class="t" style="left:219.5px;top:662px;letter-spacing:-0.62px">DEFAULT_CHAR</div>
<div class="dd" style="left:281px;top:660px;width:11px;height:13px;border:none"></div>
<div class="a" style="left:293px;top:660px;width:79px;height:14px;background:#fff"></div>
<div class="a" style="left:295px;top:661px;width:22px;height:12px;background:#161616"></div>
<div class="t" style="left:319px;top:662px;">Black</div>
<div class="dd" style="left:361px;top:660px;width:11px;height:13px;border:none"></div>
<div class="a" style="left:377px;top:661px;width:11px;height:12px;border:1px solid #6c9be2;border-radius:2px;background:#e9f1fc"><div class="t" style="left:1px;top:1px;font-size:8px;font-weight:bold;color:#3a8a3a">A</div><div class="a" style="left:7px;top:2px;width:2px;height:3px;background:#e07020"></div></div>
<div class="a" style="left:397px;top:661px;width:11px;height:12px;border:1px solid #6c9be2;border-radius:2px;background:#e9f1fc"><div class="t" style="left:1px;top:1px;font-size:8px;font-weight:bold;color:#3a8a3a">A</div><div class="a" style="left:7px;top:6px;width:2px;height:3px;background:#e07020"></div></div>
<div class="a" style="left:413px;top:660px;width:26px;height:14px;background:#fff"></div>
<div class="dd" style="left:428px;top:660px;width:11px;height:13px;border:none"></div>
<div class="sep" style="left:443px;top:658px;height:17px"></div>
<div class="a" style="left:450px;top:661px;width:12px;height:12px;border:1px solid #6c9be2;border-radius:2px;background:#e6f0fc"></div>
<svg class="a" style="left:452px;top:663px" width="8" height="8" viewBox="0 0 8 8"><path d="M0 1h8M0 3.5h8M0 6h8" stroke="#4aa04a" stroke-width="1.2"/></svg>
<div class="a" style="left:469px;top:661px;width:12px;height:12px;border:1px solid #6c9be2;border-radius:2px;background:#e6f0fc"></div>
<svg class="a" style="left:471px;top:663px" width="8" height="8" viewBox="0 0 8 8"><path d="M0 1h8M0 3.5h8M0 6h8" stroke="#4aa04a" stroke-width="1.2"/></svg>
<div class="a" style="left:488px;top:661px;width:12px;height:12px;border:1px solid #6c9be2;border-radius:2px;background:#e6f0fc"></div>
<svg class="a" style="left:490px;top:663px" width="8" height="8" viewBox="0 0 8 8"><path d="M0 1h8M0 3.5h8M0 6h8" stroke="#4aa04a" stroke-width="1.2"/></svg>
<svg class="a" style="left:507px;top:660px" width="14" height="14" viewBox="0 0 14 14"><circle cx="2" cy="2.5" r="1.5" fill="#2a4fb8"/><circle cx="2" cy="7" r="1.5" fill="#2a4fb8"/><circle cx="2" cy="11.5" r="1.5" fill="#2a4fb8"/><path d="M5 2.5h8M5 7h8M5 11.5h8" stroke="#3f9a3f" stroke-width="1.6"/></svg>
<svg class="a" style="left:525px;top:671px" width="5" height="3" viewBox="0 0 5 3"><path d="M0 0h5L2.5 3z" fill="#000"/></svg>
<div class="a" style="left:2px;top:678px;width:833px;height:76px;background:#fff;border:1px solid #a6b9d8"></div>
<div class="t" style="left:25px;top:682px;font-family:'Liberation Serif',serif;font-style:italic;font-size:12.9px;line-height:15px;color:#111;-webkit-text-stroke:0">Take into account any required works, such as tree removal, extra drainage, levelling and retaining walls, removal of rocks, etc</div>
<div class="a" style="left:1px;top:757px;width:835px;height:22px;background:linear-gradient(#fafaf6 0,#f3f2ec 40%,#f5eee8 60%,#f0f0ee 80%,#f6f7ee 100%)"></div>
<div class="a" style="left:1px;top:757px;width:835px;height:1px;background:#b9b6a6"></div>
<div class="a" style="left:1px;top:757px;width:1px;height:22px;background:#c9c6b8"></div>
<div class="a" style="left:3px;top:757px;width:27px;height:19px;background:#fdfdfb;border-left:1px solid #bdbbae"></div>
<div class="a" style="left:6px;top:773px;width:23px;height:2px;background:#f3a23a"></div>
<div class="t" style="left:8.5px;top:761.3px;">Note</div>
<div class="a" style="left:31px;top:758px;width:56px;height:18px;border:1px solid #bcc6d6;border-top:none;border-radius:0 0 3px 3px;background:linear-gradient(#f3f3ef,#fafaf8)"></div>
<div class="t" style="left:33px;top:761.3px;">Search result</div>
<div class="a" style="left:0;top:779px;width:1024px;height:1px;background:#a6a292"></div>
<div class="a" style="left:0;top:780px;width:1024px;height:15px;background:linear-gradient(#ecebdc,#e5e5d6 40%,#ebe6d8 60%,#e4e5d6 80%,#dcdccc 100%)"></div></div></body></html>
